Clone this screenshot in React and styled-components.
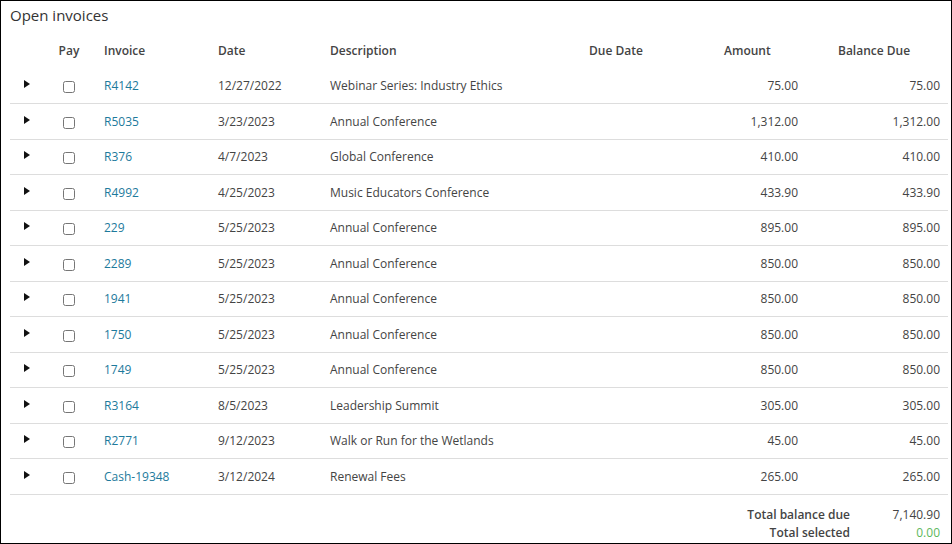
import styled, { createGlobalStyle } from "styled-components";

const Global = createGlobalStyle`
  html, body { margin: 0; background: #fff; }
  body { font-family: "Open Sans", "Liberation Sans", sans-serif; }
`;

const Frame = styled.div`
  width: 952px;
  height: 544px;
  box-sizing: border-box;
  border: 1px solid #000;
  padding: 0 3px 0 9px;
  overflow: hidden;
`;

const Title = styled.h2`
  margin: 0;
  height: 32px;
  line-height: 28px;
  font-size: 15px;
  font-weight: 400;
  color: #333;
`;

const Table = styled.table`
  width: 938px;
  border-collapse: collapse;
  table-layout: fixed;
  font-size: 12px;
  color: #444;
`;

const Th = styled.th`
  height: 35px;
  padding: 0 0 0 ${({ $pl }) => $pl ?? 8}px;
  text-align: ${({ $center }) => ($center ? "center" : "left")};
  font-weight: 600;
  color: #444;
`;

const Row = styled.tr`
  height: 35.5px;
  border-bottom: 1px solid #ddd;
`;

const Td = styled.td`
  padding: 0 ${({ $pr }) => $pr ?? 8}px 0 ${({ $pl }) => $pl ?? 8}px;
  text-align: ${({ $align }) => $align || "left"};
  white-space: nowrap;
`;

const Arrow = styled.span`
  display: inline-block;
  width: 0;
  height: 0;
  margin-left: 6px;
  border-top: 4px solid transparent;
  border-bottom: 4px solid transparent;
  border-left: 6px solid #111;
  position: relative;
  top: -2px;
`;

const Check = styled.input`
  width: 12px;
  height: 12px;
  margin: 0;
  vertical-align: middle;
`;

const Link = styled.a`
  color: #1d7a9c;
  text-decoration: none;
`;

const Totals = styled.div`
  padding-top: 11px;
  display: flex;
  flex-direction: column;
`;

const TotalLine = styled.div`
  display: flex;
  justify-content: flex-end;
  height: 18px;
  line-height: 18px;
  font-size: 12px;
  padding-right: 8px;
`;

const TotalLabel = styled.span`
  font-weight: 600;
  color: #444;
  text-align: right;
`;

const TotalValue = styled.span`
  width: 90px;
  text-align: right;
  color: ${({ $green }) => ($green ? "#5cb85c" : "#444")};
`;

const rows = [
  ["R4142", "12/27/2022", "Webinar Series: Industry Ethics", "75.00"],
  ["R5035", "3/23/2023", "Annual Conference", "1,312.00"],
  ["R376", "4/7/2023", "Global Conference", "410.00"],
  ["R4992", "4/25/2023", "Music Educators Conference", "433.90"],
  ["229", "5/25/2023", "Annual Conference", "895.00"],
  ["2289", "5/25/2023", "Annual Conference", "850.00"],
  ["1941", "5/25/2023", "Annual Conference", "850.00"],
  ["1750", "5/25/2023", "Annual Conference", "850.00"],
  ["1749", "5/25/2023", "Annual Conference", "850.00"],
  ["R3164", "8/5/2023", "Leadership Summit", "305.00"],
  ["R2771", "9/12/2023", "Walk or Run for the Wetlands", "45.00"],
  ["Cash-19348", "3/12/2024", "Renewal Fees", "265.00"],
];

export default function App() {
  return (
    <Frame>
      <Global />
      <Title>Open invoices</Title>
      <Table>
        <colgroup>
          <col style={{ width: 32 }} />
          <col style={{ width: 54 }} />
          <col style={{ width: 114 }} />
          <col style={{ width: 112 }} />
          <col style={{ width: 259 }} />
          <col style={{ width: 135 }} />
          <col style={{ width: 114 }} />
          <col style={{ width: 118 }} />
        </colgroup>
        <thead>
          <tr>
            <Th />
            <Th $center $pl={0}>Pay</Th>
            <Th>Invoice</Th>
            <Th>Date</Th>
            <Th>Description</Th>
            <Th>Due Date</Th>
            <Th>Amount</Th>
            <Th>Balance Due</Th>
          </tr>
        </thead>
        <tbody>
          {rows.map(([inv, date, desc, amt]) => (
            <Row key={inv}>
              <Td><Arrow /></Td>
              <Td $align="center" $pl={0} $pr={0}><Check type="checkbox" /></Td>
              <Td><Link>{inv}</Link></Td>
              <Td>{date}</Td>
              <Td>{desc}</Td>
              <Td />
              <Td $align="right" $pr={32}>{amt}</Td>
              <Td $align="right">{amt}</Td>
            </Row>
          ))}
        </tbody>
      </Table>
      <Totals>
        <TotalLine>
          <TotalLabel>Total balance due</TotalLabel>
          <TotalValue>7,140.90</TotalValue>
        </TotalLine>
        <TotalLine>
          <TotalLabel>Total selected</TotalLabel>
          <TotalValue $green>0.00</TotalValue>
        </TotalLine>
      </Totals>
    </Frame>
  );
}
